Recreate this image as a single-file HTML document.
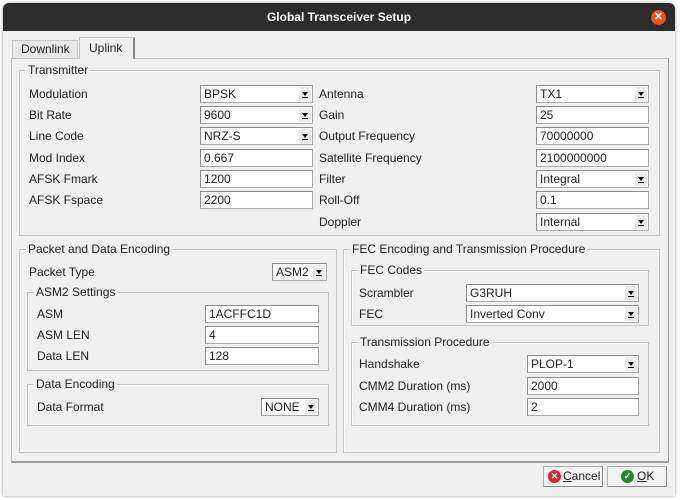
<!DOCTYPE html>
<html><head><style>
*{box-sizing:border-box;margin:0;padding:0}
body{width:680px;height:500px;background:#fff;font-family:"Liberation Sans",sans-serif;font-size:12px;color:#222;position:relative;overflow:hidden}
.win{position:absolute;left:3px;top:3px;width:672px;height:493px;background:#f0f0f0;border-radius:6px 6px 0 0;box-shadow:0 0 3px rgba(0,0,0,.4);overflow:hidden}
.tb{position:absolute;left:0;top:0;width:672px;height:28px;background:#2c2c2c;color:#fff;font-weight:bold;font-size:12px;text-align:center;line-height:28px}
.x{position:absolute;right:9px;top:7px;width:15px;height:15px;border-radius:50%;background:#e95420;color:#fff;font-size:11px;line-height:15px;text-align:center}
.a{position:absolute}
.l{position:absolute;line-height:14px;white-space:nowrap}
.g{position:absolute;border:1px solid #c4c4c4;box-shadow:inset 1px 1px 0 #fff}
.gt{position:absolute;background:#f0f0f0;padding:0 2px;line-height:12px;top:-7px;left:6px;white-space:nowrap}
.i{position:absolute;height:18px;background:#fff;border:1px solid #a8a8a8;border-top-color:#8c8c8c;border-left-color:#8c8c8c;padding-left:3px;line-height:16px;white-space:nowrap}
.c{position:absolute;height:18px;background:#fff;border:1px solid #a8a8a8;border-top-color:#8c8c8c;border-left-color:#8c8c8c;padding-left:3px;line-height:16px;white-space:nowrap}
.c::after{content:"";position:absolute;right:1px;top:1px;width:12px;height:14px;background:#ececec linear-gradient(#000,#000) no-repeat;}
.c i{position:absolute;right:4px;top:6px;width:0;height:0;border-left:3px solid transparent;border-right:3px solid transparent;border-top:4px solid #000;z-index:2}
.c b{position:absolute;right:4px;top:11px;width:6px;height:1px;background:#000;z-index:2}
.btn{position:absolute;height:21px;background:#f4f4f4;border:1px solid #b0b0b0;border-bottom-color:#8a8a8a;border-right-color:#8a8a8a;line-height:19px}
</style></head><body>
<div class="win">
<div class="tb">Global Transceiver Setup<div class="x">✕</div></div>
</div>
<style>.c::after{background:#ececec}</style>
<!-- tabs -->
<div class="a" style="left:12px;top:40px;width:66px;height:19px;border:1px solid #c8c8c8;border-bottom:none;background:#e8e8e8"></div>
<div class="l" style="left:21px;top:42px">Downlink</div>
<div class="a" style="left:79px;top:37px;width:56px;height:22px;border:1px solid #c4c4c4;border-bottom:none;border-right:2px solid #888;background:#f0f0f0;z-index:2"></div>
<div class="l" style="left:89px;top:41px;z-index:3">Uplink</div>
<div class="a" style="left:11px;top:58px;width:658px;height:405px;border:1px solid #c4c4c4;border-right-color:#999;border-bottom:2px solid #999"></div>

<!-- Transmitter -->
<div class="g" style="left:19px;top:70px;width:641px;height:166px"><div class="gt">Transmitter</div></div>
<div class="l" style="left:29px;top:87px">Modulation</div><div class="c" style="left:200px;top:85px;width:113px">BPSK<i></i><b></b></div>
<div class="l" style="left:29px;top:108px">Bit Rate</div><div class="c" style="left:200px;top:106px;width:113px">9600<i></i><b></b></div>
<div class="l" style="left:29px;top:129px">Line Code</div><div class="c" style="left:200px;top:127px;width:113px">NRZ-S<i></i><b></b></div>
<div class="l" style="left:29px;top:151px">Mod Index</div><div class="i" style="left:200px;top:149px;width:113px">0.667</div>
<div class="l" style="left:29px;top:172px">AFSK Fmark</div><div class="i" style="left:200px;top:170px;width:113px">1200</div>
<div class="l" style="left:29px;top:193px">AFSK Fspace</div><div class="i" style="left:200px;top:191px;width:113px">2200</div>

<div class="l" style="left:319px;top:87px">Antenna</div><div class="c" style="left:536px;top:85px;width:113px">TX1<i></i><b></b></div>
<div class="l" style="left:319px;top:108px">Gain</div><div class="i" style="left:536px;top:106px;width:113px">25</div>
<div class="l" style="left:319px;top:129px">Output Frequency</div><div class="i" style="left:536px;top:127px;width:113px">70000000</div>
<div class="l" style="left:319px;top:151px">Satellite Frequency</div><div class="i" style="left:536px;top:149px;width:113px">2100000000</div>
<div class="l" style="left:319px;top:172px">Filter</div><div class="c" style="left:536px;top:170px;width:113px">Integral<i></i><b></b></div>
<div class="l" style="left:319px;top:193px">Roll-Off</div><div class="i" style="left:536px;top:191px;width:113px">0.1</div>
<div class="l" style="left:319px;top:215px">Doppler</div><div class="c" style="left:536px;top:213px;width:113px">Internal<i></i><b></b></div>

<!-- Packet -->
<div class="g" style="left:19px;top:249px;width:318px;height:204px"><div class="gt">Packet and Data Encoding</div></div>
<div class="l" style="left:29px;top:265px">Packet Type</div><div class="c" style="left:272px;top:263px;width:55px">ASM2<i></i><b></b></div>
<div class="g" style="left:27px;top:292px;width:302px;height:79px"><div class="gt">ASM2 Settings</div></div>
<div class="l" style="left:37px;top:307px">ASM</div><div class="i" style="left:205px;top:305px;width:114px">1ACFFC1D</div>
<div class="l" style="left:37px;top:328px">ASM LEN</div><div class="i" style="left:205px;top:326px;width:114px">4</div>
<div class="l" style="left:37px;top:349px">Data LEN</div><div class="i" style="left:205px;top:347px;width:114px">128</div>
<div class="g" style="left:27px;top:384px;width:302px;height:42px"><div class="gt">Data Encoding</div></div>
<div class="l" style="left:37px;top:400px">Data Format</div><div class="c" style="left:261px;top:398px;width:58px">NONE<i></i><b></b></div>

<!-- FEC -->
<div class="g" style="left:343px;top:249px;width:317px;height:204px"><div class="gt">FEC Encoding and Transmission Procedure</div></div>
<div class="g" style="left:351px;top:270px;width:298px;height:56px"><div class="gt">FEC Codes</div></div>
<div class="l" style="left:359px;top:286px">Scrambler</div><div class="c" style="left:466px;top:284px;width:173px">G3RUH<i></i><b></b></div>
<div class="l" style="left:359px;top:307px">FEC</div><div class="c" style="left:466px;top:305px;width:173px">Inverted Conv<i></i><b></b></div>
<div class="g" style="left:351px;top:342px;width:298px;height:84px"><div class="gt">Transmission Procedure</div></div>
<div class="l" style="left:359px;top:357px">Handshake</div><div class="c" style="left:527px;top:355px;width:112px">PLOP-1<i></i><b></b></div>
<div class="l" style="left:359px;top:379px">CMM2 Duration (ms)</div><div class="i" style="left:527px;top:377px;width:112px">2000</div>
<div class="l" style="left:359px;top:400px">CMM4 Duration (ms)</div><div class="i" style="left:527px;top:398px;width:112px">2</div>

<!-- buttons -->
<div class="btn" style="left:543px;top:466px;width:60px"><span class="a" style="left:4px;top:3px;width:13px;height:13px;border-radius:50%;background:#d8232a;color:#fff;font-size:9px;line-height:13px;text-align:center;font-weight:bold">✕</span><span class="a" style="left:19px;top:0"><u>C</u>ancel</span></div>
<div class="btn" style="left:607px;top:466px;width:60px"><span class="a" style="left:13px;top:3px;width:13px;height:13px;border-radius:50%;background:#1e8a2e;color:#fff;font-size:9px;line-height:13px;text-align:center;font-weight:bold">✓</span><span class="a" style="left:29px;top:0"><u>O</u>K</span></div>
</body></html>
